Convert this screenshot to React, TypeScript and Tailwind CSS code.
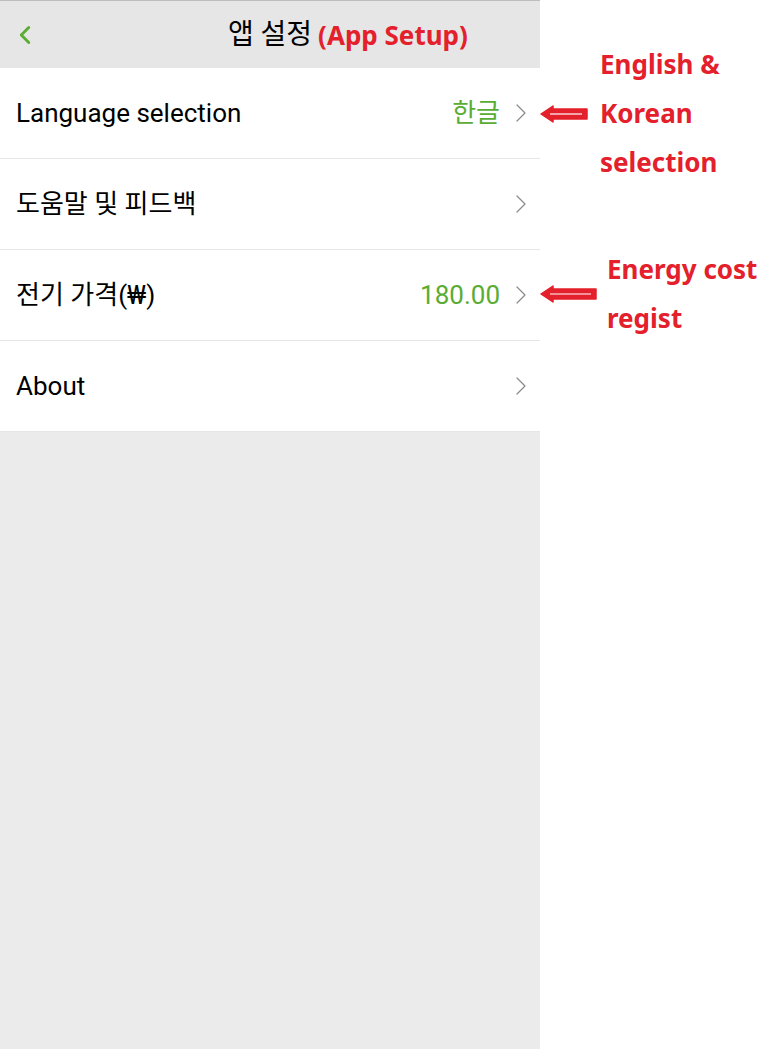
import { ChevronLeft, ChevronRight } from "lucide-react";

type Row = { label: string; value?: string };

const rows: Row[] = [
    { label: "Language selection", value: "한글" },
    { label: "도움말 및 피드백" },
    { label: "전기 가격(₩)", value: "180.00" },
    { label: "About" },
];

function RedArrow({ width }: { width: number }) {
    return (
        <svg width={width} height="18" viewBox={`0 0 ${width} 18`} className="shrink-0">
            <polygon
                points={`1,9 13,1 13,4 ${width - 1},4 ${width - 1},14 13,14 13,17`}
                fill="#e3202b"
                stroke="#e3202b"
                strokeLinejoin="round"
                strokeWidth="1.5"
            />
            <line x1="10" y1="9" x2={width - 6} y2="9" stroke="#fff" strokeWidth="1.2" />
        </svg>
    );
}

export default function App() {
    return (
        <div className="flex w-[781px] min-h-[1049px] bg-white font-['Roboto','Noto_Sans_CJK_KR',sans-serif]">
            <div className="w-[540px] shrink-0 bg-[#ebebeb] min-h-[1049px]">
                <div className="h-[68px] bg-[#e6e6e6] border-t border-[#bdbdbd] flex items-center relative">
                    <ChevronLeft className="w-[30px] h-[30px] text-[#5aac32] ml-[10px]" strokeWidth={2.3} />
                    <div className="absolute left-0 right-0 top-0 bottom-0 flex items-center justify-center">
                        <span className="relative text-[28px] leading-[34px] text-black">
                            앱 설정
                            <span className="absolute left-full top-0 ml-[6px] whitespace-nowrap text-[26px] text-[#e3202b] font-bold font-['Noto_Sans',sans-serif]">
                                (App Setup)
                            </span>
                        </span>
                    </div>
                </div>
                <div className="bg-white">
                    {rows.map((r) => (
                        <div key={r.label} className="h-[91px] border-b border-[#e6e6e6] flex items-center pl-[16px] pr-[3px]">
                            <p className="flex-1 text-[26px] text-black">{r.label}</p>
                            {r.value && <p className="text-[26px] text-[#5aac32] mr-[5px]">{r.value}</p>}
                            <ChevronRight className="w-[32px] h-[32px] text-[#8a8a8a]" strokeWidth={0.9} />
                        </div>
                    ))}
                </div>
            </div>
            <div className="flex-1 pt-[40px] text-[26px] font-bold text-[#e3202b] font-['Noto_Sans',sans-serif] leading-[49px]">
                <div className="flex items-center">
                    <RedArrow width={48} />
                    <div className="ml-[12px]">
                        <p>English &amp;</p>
                        <p>Korean</p>
                        <p>selection</p>
                    </div>
                </div>
                <div className="flex items-center mt-[58px]">
                    <RedArrow width={57} />
                    <div className="ml-[10px]">
                        <p>Energy cost</p>
                        <p>regist</p>
                    </div>
                </div>
            </div>
        </div>
    );
}
